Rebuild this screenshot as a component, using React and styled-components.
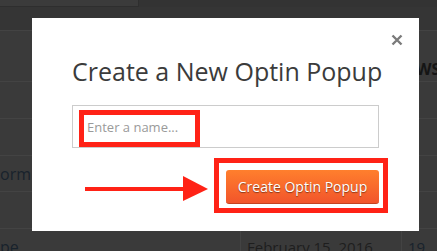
import React from "react";
import styled, { createGlobalStyle } from "styled-components";

const Global = createGlobalStyle`
  html, body { margin: 0; padding: 0; background: #383838; }
  body { font-family: "Open Sans", "Liberation Sans", sans-serif; overflow: hidden; }
  * { box-sizing: border-box; }
`;

const Page = styled.div`
  position: relative;
  width: 437px;
  height: 251px;
  overflow: hidden;
  background: #383838;
`;

const TopStrip = styled.div`
  display: flex;
  height: 7px;
  background: #333333;
`;

const TopBlock = styled.div`
  width: 139px;
  background: #3b3b3b;
  border-right: 1px solid #2e2e2e;
  border-bottom: 1px solid #2e2e2e;
`;

const Band = styled.div`
  height: 23px;
  background: #353535;
`;

const Row = styled.div`
  display: grid;
  grid-template-columns: 240px 161px 1fr;
  height: ${(p) => p.$h}px;
  border-top: 1px solid #434343;
  background: #3a3a3a;
`;

const Cell = styled.div`
  display: flex;
  align-items: ${(p) => (p.$top ? "flex-start" : "center")};
  padding-left: ${(p) => p.$pad || 0}px;
  padding-top: ${(p) => p.$pt || 0}px;
  border-left: ${(p) => (p.$line ? "1px solid #434343" : "none")};
  font-size: ${(p) => p.$size || 15}px;
  line-height: 20px;
  color: ${(p) => p.$color || "#18212a"};
  font-weight: ${(p) => (p.$bold ? 700 : 400)};
  white-space: nowrap;
  overflow: hidden;
`;

const Modal = styled.div`
  position: absolute;
  left: 32px;
  top: 18px;
  width: 387px;
  height: 213px;
  background: #ffffff;
  padding: 36px 40px 0 40px;
`;

const Close = styled.button`
  position: absolute;
  right: 15px;
  top: 15px;
  width: 14px;
  height: 14px;
  padding: 0;
  border: 0;
  background: none;
  display: flex;
  align-items: center;
  justify-content: center;
`;

const Title = styled.h1`
  margin: 0;
  font-size: 25px;
  font-weight: 400;
  line-height: 34px;
  color: #3b3b3b;
  white-space: nowrap;
`;

const Input = styled.input`
  display: block;
  margin-top: 17px;
  width: 307px;
  height: 43px;
  border: 1px solid #cccccc;
  padding: 0 14px;
  font-family: "Open Sans", "Liberation Sans", sans-serif;
  font-size: 13px;
  color: #333;
  outline: none;
  &::placeholder { color: #9a9a9a; }
`;

const ButtonRow = styled.div`
  display: flex;
  justify-content: flex-end;
  width: 307px;
  margin-top: 22px;
`;

const Button = styled.button`
  width: 153px;
  height: 34px;
  border: 0;
  border-bottom: 1px solid #c5421f;
  border-radius: 3px;
  background: linear-gradient(#ff7f2d, #f2552b);
  color: #ffffff;
  font-family: "Open Sans", "Liberation Sans", sans-serif;
  font-size: 14px;
  text-shadow: 0 1px 1px rgba(0, 0, 0, 0.45);
  padding: 0;
`;

const Highlight = styled.div`
  position: absolute;
  left: ${(p) => p.$x}px;
  top: ${(p) => p.$y}px;
  width: ${(p) => p.$w}px;
  height: ${(p) => p.$h}px;
  border: 5px solid #ff2216;
  pointer-events: none;
`;

const Arrow = styled.svg`
  position: absolute;
  left: 53px;
  top: 158px;
`;

export default function App() {
  return (
    <>
      <Global />
      <Page>
        <TopStrip>
          <TopBlock />
        </TopStrip>
        <Band />
        <Row $h={51}>
          <Cell />
          <Cell />
          <Cell $top $pt={28} $pad={6} $bold $size={16} $color="#151515">EWS</Cell>
        </Row>
        <Row $h={37}><Cell /><Cell /><Cell /></Row>
        <Row $h={37}><Cell /><Cell /><Cell /></Row>
        <Row $h={36}>
          <Cell $color="#18222c" $size={16}>orm</Cell>
          <Cell />
          <Cell />
        </Row>
        <Row $h={37}><Cell /><Cell /><Cell /></Row>
        <Row $h={37}>
          <Cell $top $pt={8} $color="#18222c" $size={16}>pe</Cell>
          <Cell $top $pt={8} $pad={6} $line $color="#1e1e1e">February 15, 2016</Cell>
          <Cell $top $pt={8} $pad={6} $line $color="#18222c">19</Cell>
        </Row>

        <Modal>
          <Close aria-label="Close">
            <svg width="12" height="12" viewBox="0 0 12 12">
              <path d="M1.5 1.5 L10.5 10.5 M10.5 1.5 L1.5 10.5" stroke="#7b7b7b" strokeWidth="2.4" strokeLinecap="butt" />
            </svg>
          </Close>
          <Title>Create a New Optin Popup</Title>
          <Input placeholder="Enter a name..." />
          <ButtonRow>
            <Button>Create Optin Popup</Button>
          </ButtonRow>
          <Highlight $x={47} $y={92} $w={121} $h={37} />
          <Highlight $x={182} $y={140} $w={174} $h={55} />
          <Arrow width="124" height="26" viewBox="0 0 124 26">
            <rect x="0" y="11" width="99" height="4" fill="#ff2216" />
            <polygon points="98,0 123,13 98,25" fill="#ff2216" />
          </Arrow>
        </Modal>
      </Page>
    </>
  );
}
